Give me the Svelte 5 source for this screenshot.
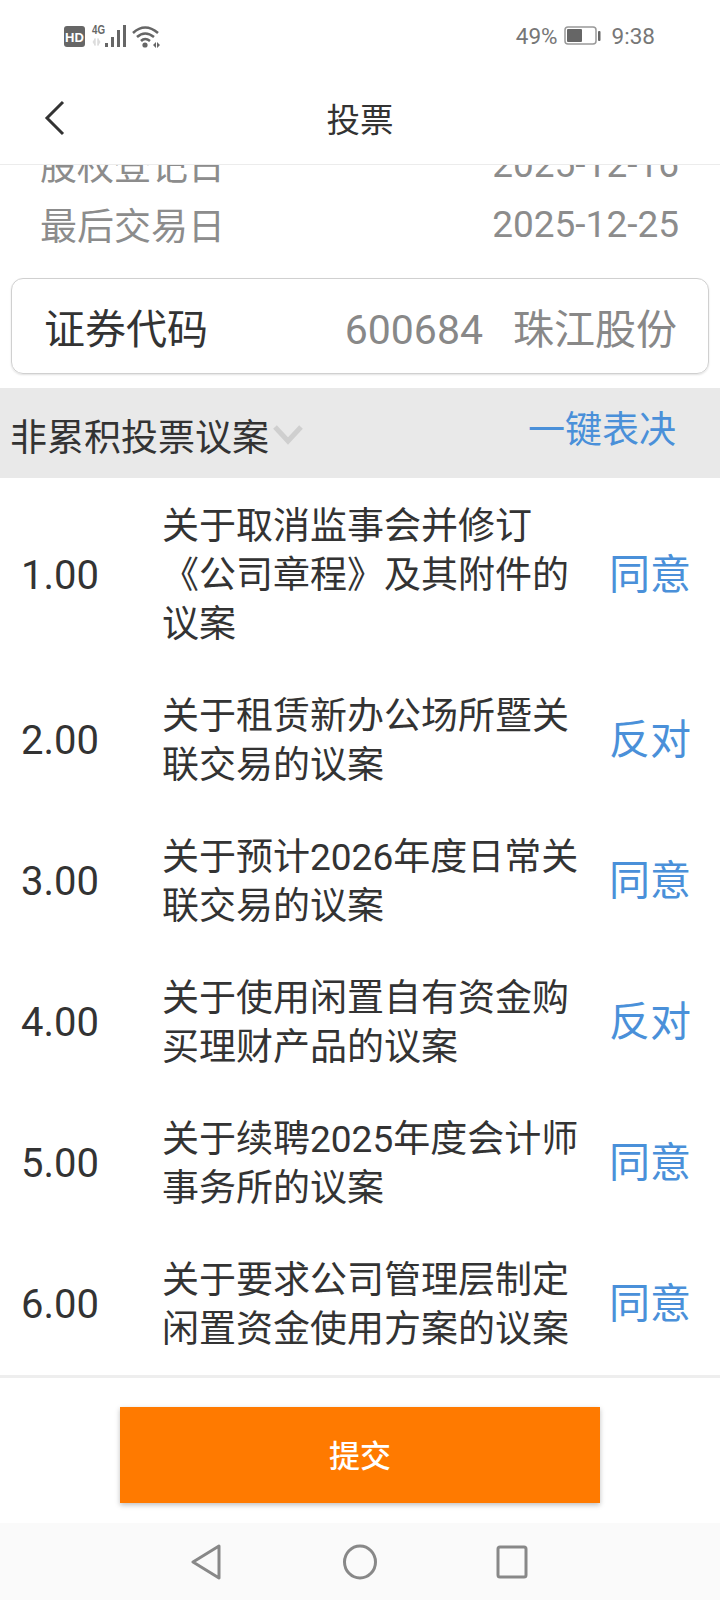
<script>
  const rows = [
    { no: '1.00', title: '关于取消监事会并修订《公司章程》及其附件的议案', vote: '同意' },
    { no: '2.00', title: '关于租赁新办公场所暨关联交易的议案', vote: '反对' },
    { no: '3.00', title: '关于预计2026年度日常关联交易的议案', vote: '同意' },
    { no: '4.00', title: '关于使用闲置自有资金购买理财产品的议案', vote: '反对' },
    { no: '5.00', title: '关于续聘2025年度会计师事务所的议案', vote: '同意' },
    { no: '6.00', title: '关于要求公司管理层制定闲置资金使用方案的议案', vote: '同意' }
  ];
</script>

<div class="page">
  <div class="status">
    <div class="left-icons">
      <svg width="100" height="26" viewBox="0 0 100 26">
        <rect x="0" y="2" width="21" height="21" rx="3" fill="#666" />
        <text x="10.5" y="18" class="hd">HD</text>
        <text x="28" y="10" class="fourg" textLength="13" lengthAdjust="spacingAndGlyphs">4G</text>
        <path d="M31 14v8M34 14v8M29 18l2-3v6zM36 18l-2-3v6z" fill="#ddd" stroke="#ddd" stroke-width="1" />
        <rect x="41" y="19" width="3" height="4" fill="#666" />
        <rect x="47" y="13" width="3" height="10" fill="#666" />
        <rect x="53" y="6" width="3" height="17" fill="#666" />
        <rect x="59" y="1" width="3" height="22" fill="#666" />
        <path d="M69 9q12-11 25 0M73 13q8-7 17 0M77 17q4-4 9 0" fill="none" stroke="#666" stroke-width="2.6" />
        <circle cx="81" cy="21" r="2.6" fill="#666" />
        <path d="M89 21l3-3v6zM93 18l3 3-3 3z" fill="#666" />
      </svg>
    </div>
    <div class="right-icons">
      <span>49%</span>
      <svg class="battery" width="37" height="20" viewBox="0 0 37 20">
        <rect x="1" y="1" width="31" height="17" rx="3" fill="#fff" stroke="#999" stroke-width="1.5" />
        <rect x="3" y="3" width="15" height="13" rx="1" fill="#666" />
        <rect x="34" y="5" width="2.5" height="10" rx="1" fill="#666" />
      </svg>
      <span>9:38</span>
    </div>
  </div>

  <header class="header">
    <svg class="back" width="22" height="36" viewBox="0 0 22 36">
      <path d="M19 2L3 18l16 16" fill="none" stroke="#333" stroke-width="3" />
    </svg>
    <h1>投票</h1>
  </header>

  <main class="scroll">
    <div class="content">
      <div class="info-row"><span>股权登记日</span><span>2025-12-16</span></div>
      <div class="info-row"><span>最后交易日</span><span>2025-12-25</span></div>

      <div class="card">
        <span class="card-label">证券代码</span>
        <span class="card-value"><span>600684</span><span>珠江股份</span></span>
      </div>

      <div class="band">
        <div class="band-title">
          <span>非累积投票议案</span>
          <svg width="34" height="22" viewBox="0 0 34 22">
            <path d="M4 3l13 14L30 3" fill="none" stroke="#cfcfcf" stroke-width="5" />
          </svg>
        </div>
        <span class="band-action">一键表决</span>
      </div>

      {#each rows as row}
        <div class="row">
          <span class="no">{row.no}</span>
          <span class="title">{row.title}</span>
          <span class="vote">{row.vote}</span>
        </div>
      {/each}
    </div>
  </main>

  <div class="footer">
    <button class="submit">提交</button>
  </div>

  <nav class="nav">
    <svg width="34" height="38" viewBox="0 0 34 38">
      <path d="M28 3L2 19l26 16z" fill="none" stroke="#888" stroke-width="3" stroke-linejoin="round" />
    </svg>
    <svg width="36" height="38" viewBox="0 0 36 38">
      <ellipse cx="18" cy="19" rx="15.5" ry="16" fill="none" stroke="#888" stroke-width="3" />
    </svg>
    <svg width="34" height="38" viewBox="0 0 34 38">
      <rect x="3" y="4" width="28" height="30" rx="2" fill="none" stroke="#888" stroke-width="3" />
    </svg>
  </nav>
</div>

<style>
  :global(body) {
    margin: 0;
    background: #fff;
  }

  .page {
    width: 720px;
    height: 1600px;
    display: flex;
    flex-direction: column;
    overflow: hidden;
    background: #fff;
    color: #333;
    font-family: Roboto, "Noto Sans CJK SC", sans-serif;
  }

  .status {
    height: 70px;
    flex: none;
    display: flex;
    justify-content: space-between;
    align-items: flex-start;
    padding: 24px 65px 0 64px;
    box-sizing: border-box;
    color: #777;
    font-size: 22.5px;
  }

  .left-icons {
    height: 26px;
  }

  .hd {
    font: 700 13px "Liberation Sans", sans-serif;
    fill: #fff;
    text-anchor: middle;
  }

  .fourg {
    font: 700 12px "Liberation Sans", sans-serif;
    fill: #666;
  }

  .right-icons {
    display: flex;
    align-items: center;
    height: 24px;
  }

  .battery {
    margin: 0 11px 0 6px;
  }

  .header {
    height: 95px;
    flex: none;
    display: flex;
    align-items: center;
    justify-content: center;
    position: relative;
    box-sizing: border-box;
    border-bottom: 1px solid #ececec;
  }

  h1 {
    margin: 0;
    font-size: 33.5px;
    font-weight: 400;
    color: #333;
  }

  .back {
    position: absolute;
    left: 44px;
    top: 30px;
  }

  .scroll {
    flex: 1;
    min-height: 0;
    overflow: hidden;
  }

  .content {
    margin-top: -31px;
  }

  .info-row {
    height: 60px;
    display: flex;
    justify-content: space-between;
    align-items: center;
    padding: 0 41px 0 40px;
    color: #8c8c8c;
    font-size: 37px;
  }

  .card {
    height: 96px;
    margin: 24px 11px 14px;
    box-sizing: border-box;
    border: 1px solid #d0d0d0;
    border-radius: 12px;
    box-shadow: 0 1px 2px rgba(0, 0, 0, 0.12);
    display: flex;
    justify-content: space-between;
    align-items: center;
    padding: 0 31px 0 32px;
    font-size: 41px;
  }

  .card-value {
    display: flex;
    align-items: baseline;
    gap: 30px;
    color: #888;
  }

  .band {
    height: 90px;
    background: #e9e9e9;
    display: flex;
    justify-content: space-between;
    align-items: center;
    padding: 0 44px 0 10px;
    font-size: 37px;
  }

  .band-title {
    display: flex;
    align-items: center;
    padding-top: 4px;
    gap: 2px;
  }

  .band-action {
    color: #4a90d9;
    padding-bottom: 13px;
  }

  .row {
    display: grid;
    grid-template-columns: 141px 418px 1fr;
    align-items: center;
    padding: 21.5px 0 21.5px 21px;
    font-size: 37px;
    line-height: 49px;
  }

  .band + .row {
    margin-top: 2px;
  }

  .no {
    font-size: 40px;
  }

  .vote {
    font-size: 41px;
    color: #4a90d9;
    padding-left: 29px;
  }

  .footer {
    height: 148px;
    flex: none;
    box-sizing: border-box;
    border-top: 3px solid #eeeeee;
    display: flex;
    justify-content: center;
    padding-top: 29px;
  }

  .submit {
    width: 480px;
    height: 96px;
    border: 0;
    padding: 0 0 4px;
    background: #ff7a00;
    color: #fff;
    font: 500 31px Roboto, "Noto Sans CJK SC", sans-serif;
    box-shadow: 0 2px 5px rgba(0, 0, 0, 0.25);
  }

  .nav {
    height: 77px;
    flex: none;
    background: #fafafa;
    display: flex;
    justify-content: center;
    gap: 117px;
    padding-top: 20px;
    box-sizing: border-box;
  }
</style>
